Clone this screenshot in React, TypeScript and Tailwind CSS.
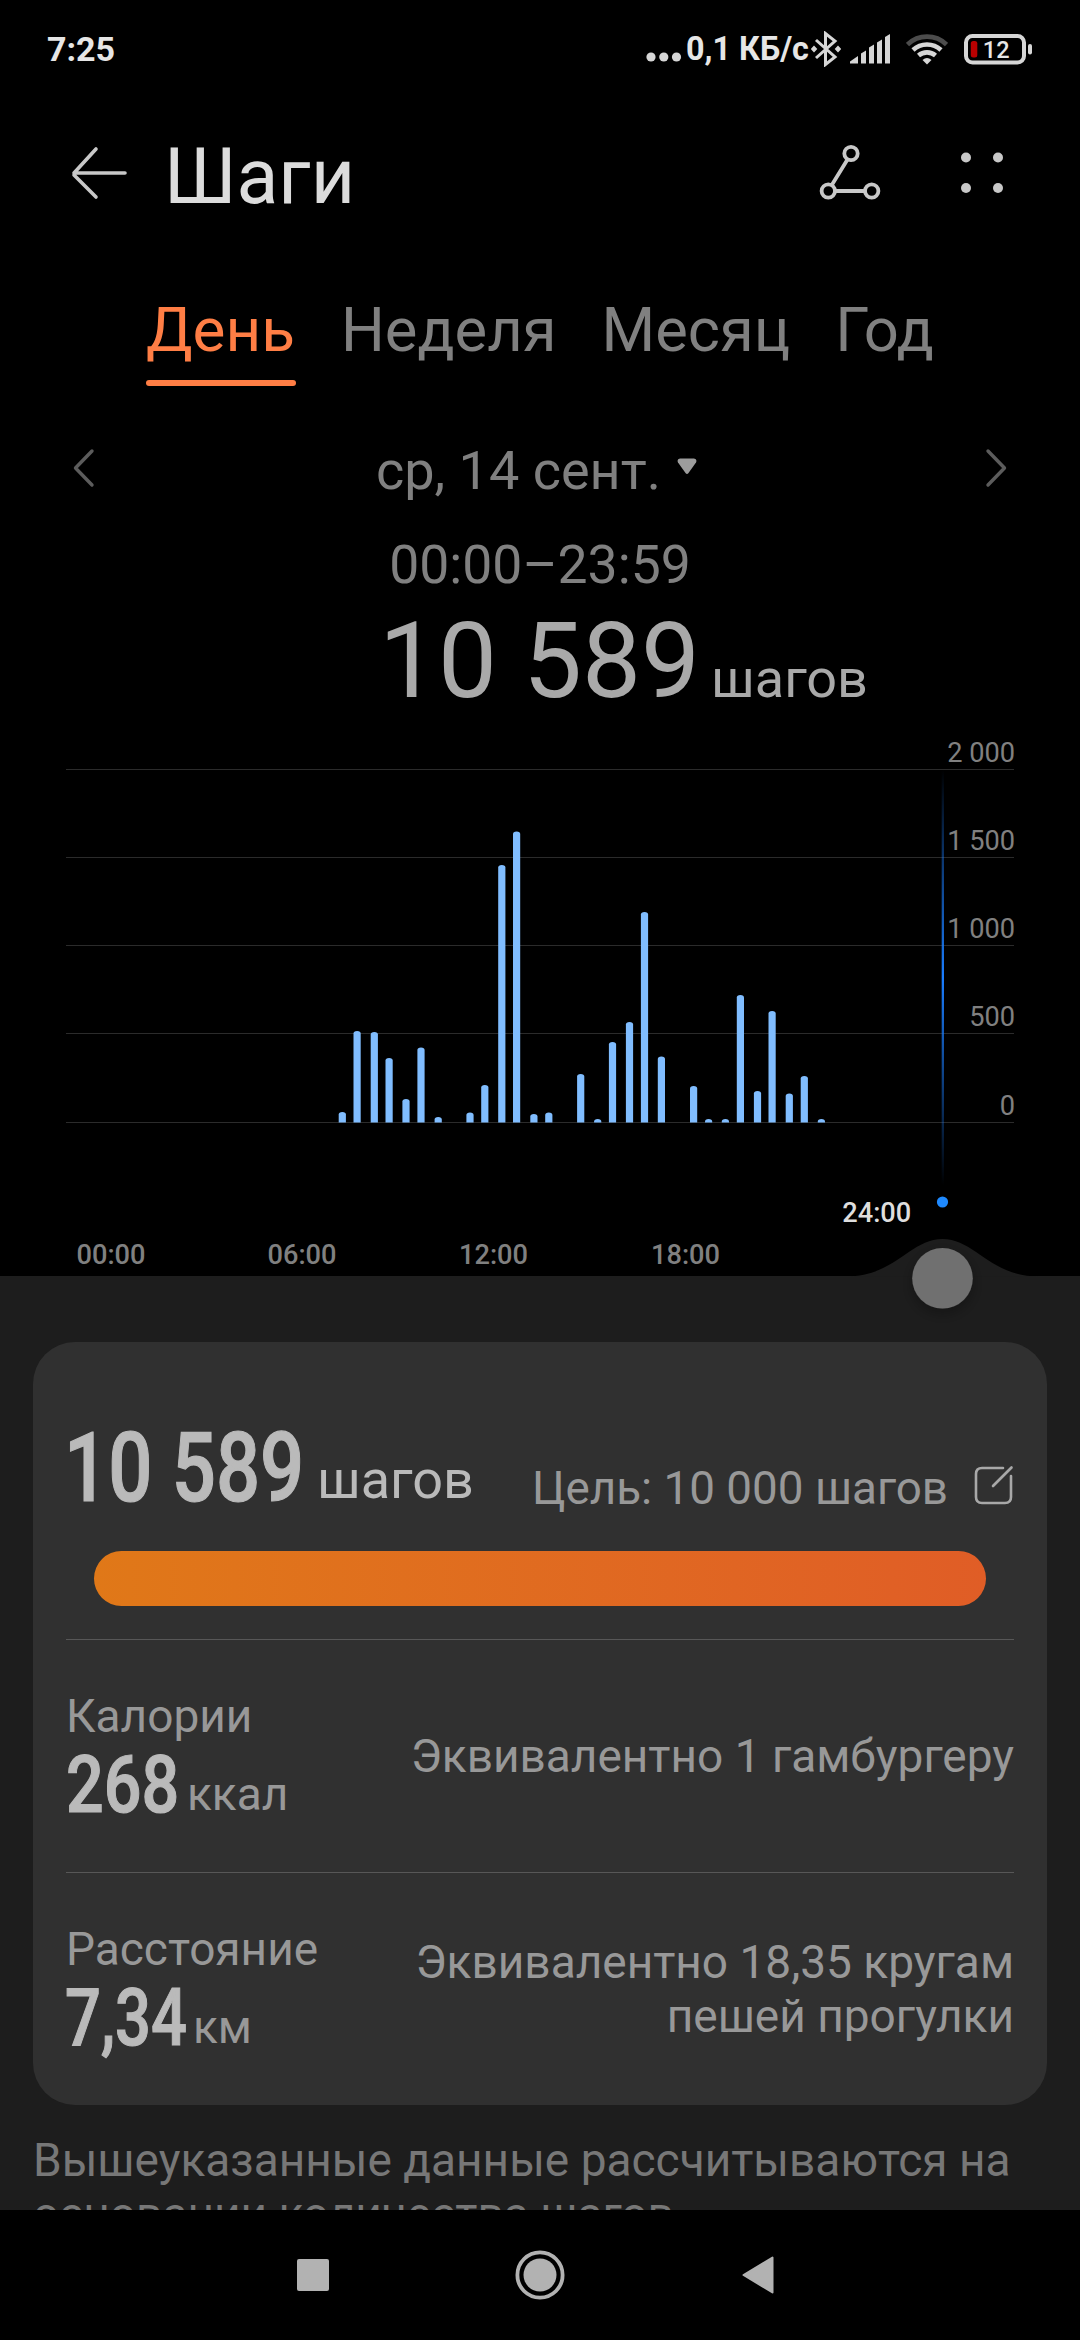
const tabs = ["День", "Неделя", "Месяц", "Год"];

// [center x, top y] of every half-hour bar, in chart coordinates
const bars = [
  [342.3, 372], [357.1, 291], [374.3, 292], [389.1, 318], [406, 359], [421, 307.5], [438.2, 377],
  [470, 372.5], [484.8, 345], [501.8, 125], [516.6, 91.5], [533.9, 374], [548.8, 372.5],
  [580.7, 334], [597.7, 379], [612.5, 302], [629.5, 282], [644.5, 172], [661.4, 316.5],
  [693.6, 346], [708.6, 379], [725.4, 379], [740.4, 255], [757.5, 351], [772.1, 271],
  [789.3, 353.5], [804.3, 336], [821.4, 379],
];

const gridLines = [
  { y: 29, label: "2 000" },
  { y: 117, label: "1 500" },
  { y: 205, label: "1 000" },
  { y: 293, label: "500" },
  { y: 382, label: "0" },
];

const hours = [
  { x: 111, label: "00:00" },
  { x: 302, label: "06:00" },
  { x: 493.5, label: "12:00" },
  { x: 685.5, label: "18:00" },
];

function StatusBar() {
  return (
    <div className="flex h-[98px] items-center pl-[47px] pr-[47px] text-[34px] font-bold text-[#e6e6e6]">
      <span>7:25</span>
      <div className="ml-auto flex items-center">
        <svg width="36" height="10" viewBox="0 0 36 10" fill="#d6d6d6" className="mt-4 mr-[4px]">
          <circle cx="5" cy="5" r="4.6" />
          <circle cx="17.8" cy="5" r="4.6" />
          <circle cx="30.5" cy="5" r="4.6" />
        </svg>
        <span className="w-[123px] whitespace-nowrap text-[32.3px]">0,1 КБ/с</span>
        <svg width="30" height="36" viewBox="0 0 30 36" fill="none" stroke="#d6d6d6" strokeWidth="3" className="ml-0.5">
          <path d="M5 9 L24 26 L14.5 33.5 V2.5 L24 10 L5 27" />
          <path d="M3 14.5 L6.3 18 L3 21.5 L-0.3 18 Z M27 14.5 L30.3 18 L27 21.5 L23.7 18 Z" fill="#d6d6d6" stroke="none" />
        </svg>
        <svg width="40" height="30" viewBox="0 0 40 30" fill="#d6d6d6" className="ml-[9px]">
          <path d="M0 29.5 V27.5 L8 22 V29.5 Z" />
          <path d="M11 29.5 V19.5 L16 16.5 V29.5 Z" />
          <path d="M19 29.5 V13.5 L24 10.5 V29.5 Z" />
          <path d="M27 29.5 V8.5 L32 5.5 V29.5 Z" />
          <path d="M35 29.5 V3 L40 0 V29.5 Z" />
        </svg>
        <svg width="42" height="32" viewBox="0 0 42 32" fill="none" strokeWidth="4.6" className="ml-4">
          <path d="M1.5 11.5 A28 28 0 0 1 40.5 11.5" stroke="#4c4c4c" />
          <path d="M7 17 A20.5 20.5 0 0 1 35 17" stroke="#d6d6d6" />
          <path d="M12.5 22.5 A13 13 0 0 1 29.5 22.5" stroke="#d6d6d6" />
          <path d="M21 31.5 L16.5 27 Q21 23 25.5 27 Z" fill="#d6d6d6" />
        </svg>
        <svg width="69" height="31" viewBox="0 0 69 31" className="ml-4">
          <rect x="2" y="2" width="58" height="26.5" rx="6.5" fill="none" stroke="#d6d6d6" strokeWidth="4" />
          <rect x="64" y="10" width="4" height="10.5" rx="2" fill="#d6d6d6" />
          <rect x="6.8" y="7" width="6.5" height="16.5" rx="2.5" fill="#b80000" />
          <text x="18.8" y="24" fontSize="23.5" fontWeight="500" fill="#e6e6e6">12</text>
        </svg>
      </div>
    </div>
  );
}

function Header() {
  return (
    <div className="flex h-[154px] items-center pl-[71px] pr-[76px]">
      <svg width="56" height="54" viewBox="0 0 56 54" fill="none" stroke="#c8c8c8" strokeWidth="3.6" strokeLinecap="round" strokeLinejoin="round" className="-mt-1">
        <path d="M25 3 L3 27 H54 M3 29 L25 51" />
      </svg>
      <h1 className="ml-[37px] mt-1 text-[77px] leading-none text-[#dcdcdc]">Шаги</h1>
      <svg width="62" height="58" viewBox="0 0 62 58" fill="none" stroke="#c8c8c8" strokeWidth="3.8" className="-mt-1 ml-auto">
        <circle cx="32" cy="9.5" r="6.7" />
        <circle cx="9.3" cy="47" r="6.7" />
        <circle cx="52.7" cy="47" r="6.7" />
        <path d="M28.5 15.5 L12.8 41 M16 47 H46" />
      </svg>
      <svg width="44" height="44" viewBox="0 0 44 44" fill="#c8c8c8" className="-mt-1 ml-[79px]">
        <circle cx="6" cy="6.5" r="5" />
        <circle cx="38" cy="6.5" r="5" />
        <circle cx="6" cy="37" r="5" />
        <circle cx="38" cy="37" r="5" />
      </svg>
    </div>
  );
}

function Tabs() {
  return (
    <div className="flex gap-[45px] pl-[146px] pt-[38px] text-[61.5px] leading-[80px] text-[#808080]">
      {tabs.map((tab, i) => (
        <div key={tab} className={i === 0 ? "w-[150px] text-[62px] text-[#ff7e45]" : ""}>
          {tab}
          {i === 0 && <div className="mt-[10px] h-[6px] rounded-full bg-[#ff7e45]" />}
        </div>
      ))}
    </div>
  );
}

function Chart() {
  return (
    <svg width="1080" height="536" viewBox="0 0 1080 536" className="relative z-10 block overflow-visible" fontSize="27.2">
      <defs>
        <linearGradient id="cursor" x1="0" y1="0" x2="0" y2="1">
          <stop offset="0" stopColor="#1a7dff" stopOpacity="0" />
          <stop offset="0.5" stopColor="#1a7dff" />
          <stop offset="1" stopColor="#1a7dff" stopOpacity="0" />
        </linearGradient>
        <filter id="knobShadow" x="-50%" y="-50%" width="200%" height="200%">
          <feDropShadow dx="0" dy="5" stdDeviation="7" floodColor="#000" floodOpacity="0.3" />
        </filter>
      </defs>
      {gridLines.map((line) => (
        <g key={line.label}>
          <rect x="66" y={line.y} width="948" height="1" fill="#2b2b2b" />
          <text x="1015" y={line.y - 7} textAnchor="end" fill="#808080">{line.label}</text>
        </g>
      ))}
      {bars.map(([x, y]) => (
        <path
          key={x}
          d={`M${x - 3.6} 382.5 V${y + 2.5} Q${x - 3.6} ${y} ${x} ${y} Q${x + 3.6} ${y} ${x + 3.6} ${y + 2.5} V382.5 Z`}
          fill="#80bdff"
        />
      ))}
      <rect x="941.7" y="30" width="2.3" height="415" fill="url(#cursor)" />
      <circle cx="942.5" cy="462" r="5.6" fill="#1f8aff" />
      <text x="876.8" y="482" textAnchor="middle" fontWeight="500" fill="#dedede">24:00</text>
      {hours.map((hour) => (
        <text key={hour.label} x={hour.x} y="524" textAnchor="middle" fontWeight="500" fill="#808080">{hour.label}</text>
      ))}
      <path d="M846 536.5 C895 536.5 910 499 942.5 499 C975 499 990 536.5 1039 536.5 Z" fill="#1d1d1d" />
      <circle cx="942.5" cy="538.3" r="30.3" fill="#6f6f6f" filter="url(#knobShadow)" />
    </svg>
  );
}

function Summary() {
  return (
    <div className="mx-[33px] mt-[66px] h-[763px] rounded-[42px] bg-[#303030] px-[33px] text-[46px] text-[#989898]">
      <div className="flex h-[209px] items-baseline pt-[78px]">
        <div className="w-[251px]">
          <div className="-ml-[2px] origin-left scale-x-[0.81] whitespace-nowrap text-[96px] font-medium leading-[96px] text-[#bababa] [-webkit-text-stroke:1.2px_#bababa]">10 589</div>
        </div>
        <span className="relative -top-[3px] text-[54px] text-[#bababa]">шагов</span>
        <span className="relative top-[3px] ml-auto text-[45.8px]">Цель: 10 000 шагов</span>
        <svg width="40" height="40" viewBox="0 0 40 40" fill="none" stroke="#a8a8a8" strokeWidth="2.6" strokeLinecap="round" className="relative top-[4px] ml-[26px]">
          <path d="M29 3 H8 Q2 3 2 9 V32 Q2 38 8 38 H31 Q37 38 37 32 V11" />
          <path d="M19 21 L37.5 2.5" />
        </svg>
      </div>
      <div className="mx-7 h-[55px] rounded-full bg-linear-to-r from-[#e07818] to-[#e05d26]" />
      <div className="mt-[33px] flex h-[233px] items-center justify-between border-t border-[#575757]">
        <div className="pt-2">
          <div className="leading-[54px]">Калории</div>
          <div className="flex items-baseline">
            <div className="w-[121px]">
              <div className="origin-left scale-x-[0.83] text-[80px] font-medium leading-[84px] text-[#bababa] [-webkit-text-stroke:1.2px_#bababa]">268</div>
            </div>
            <span className="relative -top-[2px]">ккал</span>
          </div>
        </div>
        <div>Эквивалентно 1 гамбургеру</div>
      </div>
      <div className="flex h-[233px] items-center justify-between border-t border-[#575757]">
        <div className="pt-2">
          <div className="leading-[54px]">Расстояние</div>
          <div className="flex items-baseline">
            <div className="w-[127px]">
              <div className="-ml-px origin-left scale-x-[0.79] text-[80px] font-medium leading-[84px] text-[#bababa] [-webkit-text-stroke:1.2px_#bababa]">7,34</div>
            </div>
            <span className="relative -top-[2px]">км</span>
          </div>
        </div>
        <div className="text-right leading-[54px]">
          Эквивалентно 18,35 кругам
          <br />
          пешей прогулки
        </div>
      </div>
    </div>
  );
}

function NavBar() {
  return (
    <div className="flex h-[130px] items-center justify-between bg-black pl-[297px] pr-[306px]">
      <div className="h-8 w-8 rounded-[2px] bg-[#b2b2b2]" />
      <svg width="50" height="50" viewBox="0 0 50 50" className="ml-2">
        <circle cx="25" cy="25" r="22.6" fill="none" stroke="#b2b2b2" strokeWidth="3.8" />
        <circle cx="25" cy="25" r="16.5" fill="#b2b2b2" />
      </svg>
      <svg width="32" height="38" viewBox="0 0 32 38" fill="#b2b2b2" stroke="#b2b2b2" strokeWidth="2" strokeLinejoin="round">
        <path d="M1.5 19 L30.5 1.5 V36.5 Z" />
      </svg>
    </div>
  );
}

export default function App() {
  return (
    <div className="flex h-[2340px] w-[1080px] flex-col overflow-hidden bg-black font-[Roboto,sans-serif]">
      <StatusBar />
      <Header />
      <Tabs />
      <div className="mt-[54px] flex h-[60px] items-center px-[73px] text-[54px] text-[#808080]">
        <svg width="22" height="40" viewBox="0 0 22 40" fill="none" stroke="#5c5c5c" strokeWidth="3.4" strokeLinecap="round" strokeLinejoin="round" className="-mt-1">
          <path d="M19 3 L2.5 20 L19 37" />
        </svg>
        <span className="ml-[281px]">ср, 14 сент.</span>
        <svg width="20" height="17" viewBox="0 0 20 17" fill="#9c9c9c" className="-mt-2 ml-[16px]">
          <path d="M3 0.5 H17 Q20.5 1 19 4.5 L11.5 15 Q10 17 8.5 15 L1 4.5 Q-0.5 1 3 0.5 Z" />
        </svg>
        <svg width="22" height="40" viewBox="0 0 22 40" fill="none" stroke="#5c5c5c" strokeWidth="3.4" strokeLinecap="round" strokeLinejoin="round" className="-mt-1 ml-auto">
          <path d="M3 3 L19.5 20 L3 37" />
        </svg>
      </div>
      <div className="mt-[35px] text-center text-[53.5px] leading-[60px] text-[#808080]">00:00–23:59</div>
      <div className="mt-[14px] flex h-[131px] items-baseline pl-[379px] text-[#a9a9a9]">
        <span className="text-[105px] leading-[105px]">10 589</span>
        <span className="ml-[11px] text-[54px]">шагов</span>
      </div>
      <Chart />
      <div className="h-[934px] overflow-hidden bg-[#1d1d1d]">
        <Summary />
        <p className="mt-7 px-[33px] text-[46px] leading-[54px] text-[#777777]">
          Вышеуказанные данные рассчитываются на основании количества шагов.
        </p>
      </div>
      <NavBar />
    </div>
  );
}
